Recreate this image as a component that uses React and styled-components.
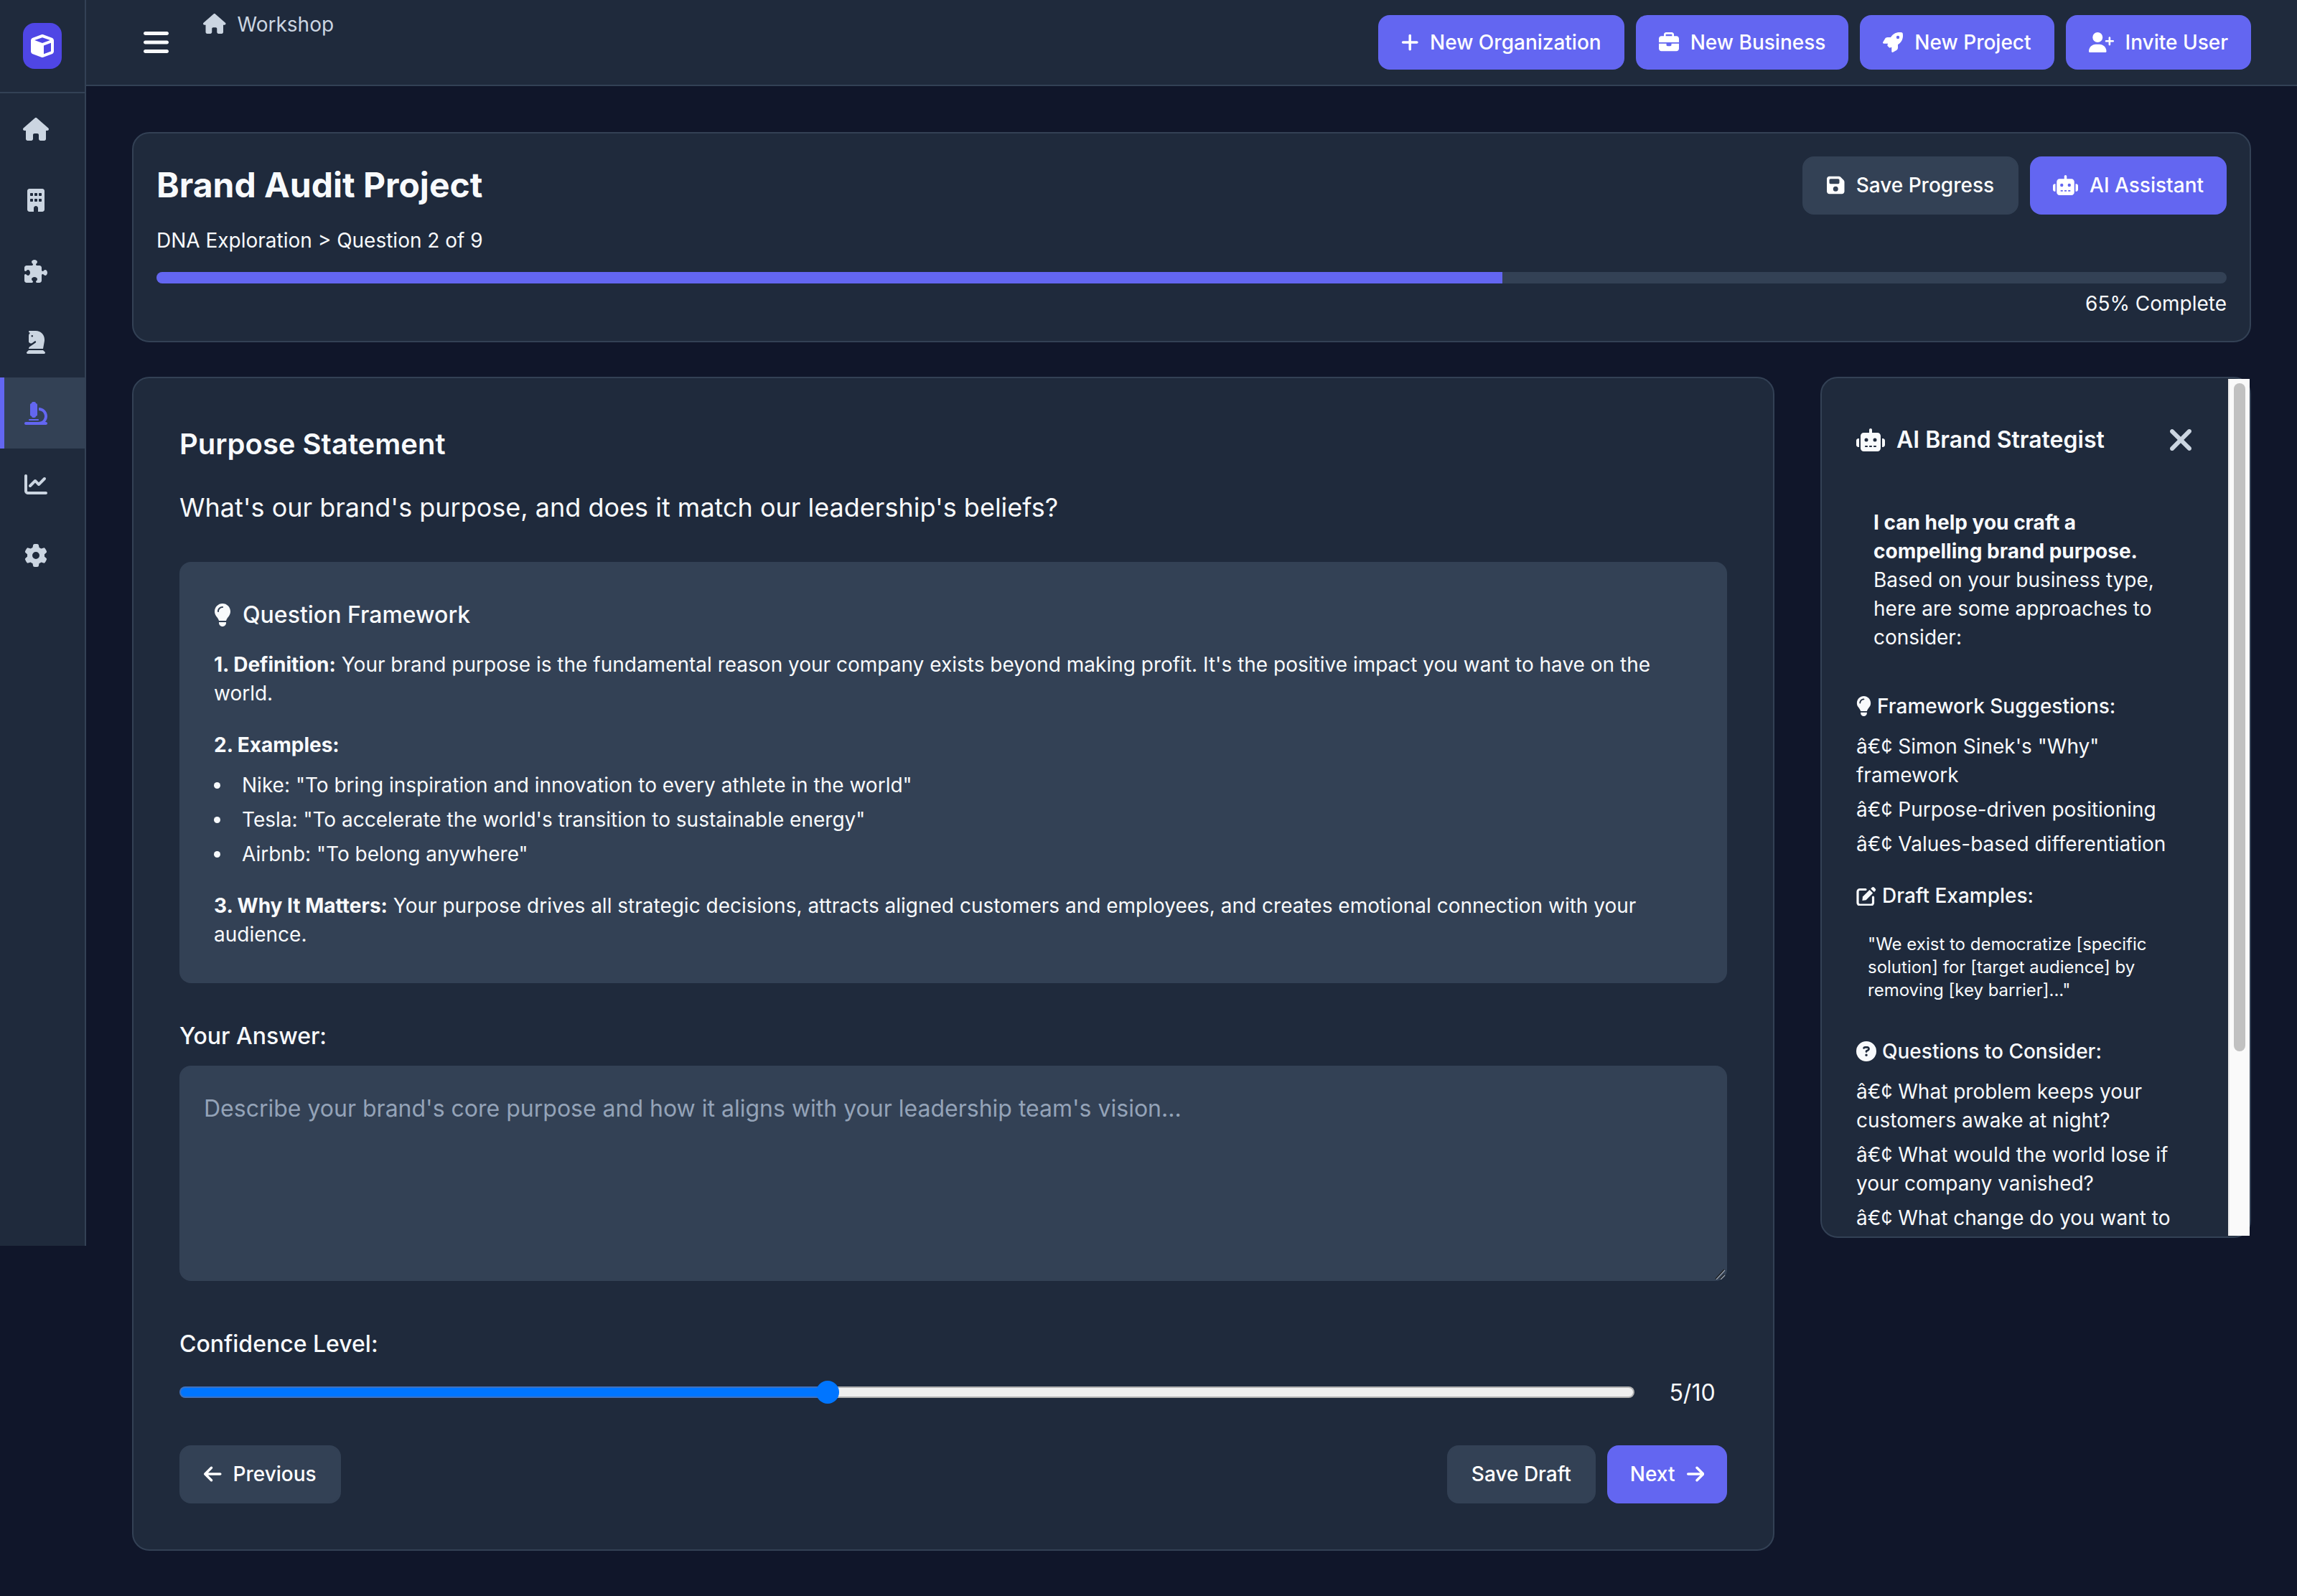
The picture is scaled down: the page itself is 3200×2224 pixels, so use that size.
import React from "react";
import styled, { createGlobalStyle } from "styled-components";
import {
  FaHouse as House, FaBuilding as Building, FaPuzzlePiece, FaChessKnight as Knight, FaMicroscope, FaChartLine, FaGear, FaCube,
  FaBars as Bars, FaPlus as Plus, FaBriefcase, FaRocket, FaUserPlus as UserPlus, FaFloppyDisk as Floppy, FaRobot as Robot,
  FaLightbulb as Bulb, FaXmark as Xmark, FaCircleQuestion, FaArrowLeft as ArrowLeft, FaArrowRight as ArrowRight,
} from "react-icons/fa6";

/* Font Awesome glyphs have their own width/height ratio; react-icons draws them all in a square box. */
const glyph = (Icon, ratio) => styled(Icon)`
  width: ${ratio}em;
  height: 1em;
  flex: none;
`;
const FaHouse = glyph(House, 1.125);
const FaBuilding = glyph(Building, 0.75);
const FaChessKnight = glyph(Knight, 0.875);
const FaBars = glyph(Bars, 0.875);
const FaPlus = glyph(Plus, 0.875);
const FaUserPlus = glyph(UserPlus, 1.25);
const FaFloppyDisk = glyph(Floppy, 0.875);
const FaRobot = glyph(Robot, 1.25);
const FaLightbulb = glyph(Bulb, 0.75);
const FaXmark = glyph(Xmark, 0.75);
const FaArrowLeft = glyph(ArrowLeft, 0.875);
const FaArrowRight = glyph(ArrowRight, 0.875);

const EditSvg = styled.svg`
  width: 1em;
  height: 1em;
  flex: none;
`;
const EditIcon = () => (
  <EditSvg viewBox="0 0 28 28">
    <path d="M13 5.5H5a3 3 0 0 0-3 3V24a3 3 0 0 0 3 3h15.5a3 3 0 0 0 3-3v-8" fill="none" stroke="currentColor" strokeWidth="3.2" strokeLinecap="round" />
    <path d="M9 15.6 18.6 6l4.6 4.6-9.6 9.6-5.2.7Z" fill="currentColor" />
    <path d="M20.2 4.4l1.8-1.8a2 2 0 0 1 2.8 0l1.8 1.8a2 2 0 0 1 0 2.8L25 9Z" fill="currentColor" />
  </EditSvg>
);

const Global = createGlobalStyle`
  * { box-sizing: border-box; }
  html, body { margin: 0; padding: 0; background: #10162a; }
  body { font-family: Inter, "Liberation Sans", sans-serif; color: #f8fafc; line-height: 1.6; }
`;

const Shell = styled.div`
  display: flex;
  align-items: flex-start;
  width: 3200px;
  min-height: 2224px;
`;
const Sidebar = styled.aside`
  flex: 0 0 120px;
  height: 1736px;
  background: #1f2a3c;
  border-right: 2px solid #334155;
`;
const SideHead = styled.div`
  height: 130px;
  padding: 32px;
  border-bottom: 2px solid #334155;
`;
const Logo = styled.div`
  width: 54px;
  height: 64px;
  border-radius: 16px;
  background: #4f46e5;
  color: #fff;
  font-size: 32px;
  display: flex;
  align-items: center;
  justify-content: center;
`;
const NavItem = styled.div`
  height: 99px;
  display: flex;
  align-items: center;
  padding-left: ${(p) => (p.$active ? "24px" : "30px")};
  font-size: 32px;
  color: ${(p) => (p.$active ? "#6366f1" : "#cbd5e1")};
  background: ${(p) => (p.$active ? "#334155" : "transparent")};
  border-left: ${(p) => (p.$active ? "6px solid #6366f1" : "0")};
`;
const NavIcon = styled.span`
  width: 40px;
  display: flex;
  justify-content: center;
`;
const Column = styled.div`
  flex: 1;
  min-width: 0;
`;
const Topbar = styled.header`
  height: 120px;
  background: #1f2a3c;
  border-bottom: 2px solid #334155;
  padding: 0 64px 0 80px;
  display: flex;
  align-items: center;
`;
const Burger = styled.div`
  display: flex;
  font-size: 40px;
  color: #f8fafc;
  margin-right: 48px;
`;
const Crumb = styled.div`
  align-self: flex-start;
  margin-top: 12px;
  display: flex;
  align-items: center;
  gap: 16px;
  font-size: 28px;
  line-height: 44px;
  color: #cbd5e1;
  svg { margin-top: -2px; }
`;
const TopActions = styled.div`
  margin-left: auto;
  display: flex;
  gap: 16px;
`;
const Button = styled.button`
  font-family: inherit;
  font-size: 28px;
  font-weight: 500;
  line-height: 36px;
  height: ${(p) => (p.$top ? "76px" : "81px")};
  padding: 0 32px ${(p) => (p.$top ? "0" : "1px")};
  border: ${(p) => (p.$muted ? "2px solid #334155" : "0")};
  border-radius: 16px;
  display: inline-flex;
  align-items: center;
  gap: 16px;
  color: #fff;
  background: ${(p) => (p.$muted ? "#334155" : "#6366f1")};
`;
const Workspace = styled.main`
  padding: 64px;
`;
const Card = styled.section`
  background: #1f2a3c;
  border: 2px solid #334155;
  border-radius: 24px;
`;
const HeaderCard = styled(Card)`
  padding: 32px 32px 32px;
  margin-bottom: 48px;
`;
const HeaderRow = styled.div`
  display: flex;
  justify-content: space-between;
  align-items: flex-start;
`;
const Title = styled.h1`
  margin: 2px 0 16px;
  font-size: 48px;
  line-height: 76.8px;
  font-weight: 700;
`;
const Subtitle = styled.p`
  margin: 0;
  font-size: 28px;
  line-height: 44.8px;
`;
const ActionGroup = styled.div`
  display: flex;
  gap: 16px;
`;
const Track = styled.div`
  height: 16px;
  margin-top: 21px;
  border-radius: 8px;
  overflow: hidden;
  background: #334155;
`;
const Fill = styled.div`
  height: 100%;
  background: #6366f1;
`;
const Percent = styled.div`
  margin-top: 8px;
  text-align: right;
  font-size: 28px;
  line-height: 40px;
`;
const Grid = styled.div`
  display: grid;
  grid-template-columns: 1fr 600px;
  gap: 64px;
  align-items: start;
`;
const MainCard = styled(Card)`
  padding: 64px;
`;
const Heading = styled.h2`
  margin: 0 0 32px;
  font-size: 40px;
  line-height: 56px;
  font-weight: 600;
`;
const Question = styled.p`
  margin: 0 0 47px;
  font-size: 36px;
  line-height: 57.6px;
`;
const Framework = styled.div`
  background: #334155;
  border-radius: 16px;
  padding: 48px;
  margin-bottom: 48px;
`;
const FrameTitle = styled.h3`
  margin: 0 0 24px;
  display: flex;
  align-items: center;
  gap: 16px;
  font-size: 32px;
  line-height: 51px;
  font-weight: 500;
`;
const FrameText = styled.p`
  margin: 0 0 ${(p) => p.$gap ?? 32}px;
  font-size: 28px;
  line-height: 40px;
  strong { font-weight: 700; }
`;
const FrameList = styled.ul`
  margin: 0 0 32px;
  padding: 0;
  list-style: none;
  font-size: 28px;
  line-height: 40px;
`;
const FrameItem = styled.li`
  display: flex;
  align-items: center;
  margin-bottom: 8px;
  &:last-child { margin-bottom: 0; }
  &::before {
    content: "";
    flex: none;
    width: 9px;
    height: 9px;
    margin-right: 30px;
    border-radius: 50%;
    background: #f8fafc;
  }
`;
const Label = styled.label`
  display: block;
  margin-bottom: 16px;
  font-size: 32px;
  line-height: 51px;
  font-weight: 500;
`;
const AnswerWrap = styled.div`
  position: relative;
  margin-bottom: 62px;
`;
const Answer = styled.textarea`
  display: block;
  width: 100%;
  height: 300px;
  padding: 32px;
  background: #334155;
  border: 2px solid #334155;
  border-radius: 16px;
  color: #f8fafc;
  font-family: inherit;
  font-size: 32px;
  line-height: 51px;
  resize: none;
  outline: none;
  &::placeholder { color: #94a3b8; opacity: 1; }
`;
const Grip = styled.svg`
  position: absolute;
  right: 2px;
  bottom: 2px;
  width: 16px;
  height: 16px;
`;
const SliderRow = styled.div`
  display: flex;
  align-items: center;
  gap: 32px;
  height: 52px;
  margin-bottom: 48px;
`;
const Range = styled.input`
  flex: 1;
  min-width: 0;
  margin: 0;
  height: 32px;
  appearance: none;
  background: transparent;
  &::-webkit-slider-runnable-track {
    height: 16px;
    border-radius: 8px;
    border: 2px solid transparent;
    background:
      linear-gradient(to right, #0075ff var(--fill), #efefef var(--fill)) padding-box,
      linear-gradient(to right, #3f72bf var(--fill), #b2b2b2 var(--fill)) border-box;
  }
  &::-webkit-slider-thumb {
    appearance: none;
    width: 32px;
    height: 32px;
    margin-top: -10px;
    border-radius: 50%;
    background: #0075ff;
  }
`;
const RangeValue = styled.div`
  flex: 0 0 97px;
  text-align: center;
  font-size: 32px;
  line-height: 51px;
`;
const NavRow = styled.div`
  display: flex;
  justify-content: space-between;
`;
const Assistant = styled(Card)`
  position: relative;
  height: 1200px;
`;
const AssistantBody = styled.div`
  height: 100%;
  overflow: hidden;
  padding: 48px 78px 0 48px;
  border-radius: 22px;
`;
const ScrollTrack = styled.div`
  position: absolute;
  top: 1px;
  right: 0;
  bottom: 1px;
  width: 30px;
  background: #fafafa;
  border-left: 2px solid #e8e8e8;
`;
const ScrollThumb = styled.div`
  margin: 6px 0 0 6px;
  width: 16px;
  height: 931px;
  border-radius: 8px;
  background: #c1c1c1;
`;
const AssistantHead = styled.div`
  height: 76px;
  margin-bottom: 33px;
  display: flex;
  align-items: center;
  justify-content: space-between;
`;
const AssistantTitle = styled.h3`
  margin: 0;
  display: flex;
  align-items: center;
  gap: 16px;
  font-size: 32px;
  line-height: 51px;
  font-weight: 600;
`;
const Close = styled.div`
  display: flex;
  color: #cbd5e1;
  font-size: 48px;
`;
const Intro = styled.p`
  margin: 0 0 32px;
  padding: 24px;
  font-size: 28px;
  line-height: 40px;
  strong { font-weight: 700; }
`;
const TipGroup = styled.div`
  margin-bottom: 32px;
`;
const TipHead = styled.h4`
  margin: 0 0 16px;
  display: flex;
  align-items: center;
  gap: 8px;
  font-size: 28px;
  line-height: 40px;
  font-weight: 500;
`;
const TipItem = styled.div`
  margin-bottom: 8px;
  font-size: 28px;
  line-height: 40px;
`;
const Draft = styled.blockquote`
  margin: 0 0 33px;
  padding: 16px;
  font-size: 24px;
  line-height: 32px;
`;

const nav = [FaHouse, FaBuilding, FaPuzzlePiece, FaChessKnight, FaMicroscope, FaChartLine, FaGear];
const confidence = { value: 5, min: 1, max: 10 };
const thumbAt = (confidence.value - confidence.min) / (confidence.max - confidence.min);

export default function App() {
  return (
    <>
      <Global />
      <Shell>
        <Sidebar>
          <SideHead>
            <Logo><FaCube /></Logo>
          </SideHead>
          {nav.map((Icon, i) => (
            <NavItem key={i} $active={i === 4}><NavIcon><Icon /></NavIcon></NavItem>
          ))}
        </Sidebar>
        <Column>
          <Topbar>
            <Burger><FaBars /></Burger>
            <Crumb><FaHouse />Workshop</Crumb>
            <TopActions>
              <Button $top><FaPlus />New Organization</Button>
              <Button $top><FaBriefcase />New Business</Button>
              <Button $top><FaRocket />New Project</Button>
              <Button $top><FaUserPlus />Invite User</Button>
            </TopActions>
          </Topbar>
          <Workspace>
            <HeaderCard>
              <HeaderRow>
                <div>
                  <Title>Brand Audit Project</Title>
                  <Subtitle>DNA Exploration &gt; Question 2 of 9</Subtitle>
                </div>
                <ActionGroup>
                  <Button $muted><FaFloppyDisk />Save Progress</Button>
                  <Button><FaRobot />AI Assistant</Button>
                </ActionGroup>
              </HeaderRow>
              <Track><Fill style={{ width: "65%" }} /></Track>
              <Percent>65% Complete</Percent>
            </HeaderCard>
            <Grid>
              <MainCard>
                <Heading>Purpose Statement</Heading>
                <Question>What's our brand's purpose, and does it match our leadership's beliefs?</Question>
                <Framework>
                  <FrameTitle><FaLightbulb />Question Framework</FrameTitle>
                  <FrameText>
                    <strong>1. Definition:</strong> Your brand purpose is the fundamental reason your company exists beyond making profit. It's the positive impact you want to have on the world.
                  </FrameText>
                  <FrameText $gap={16}><strong>2. Examples:</strong></FrameText>
                  <FrameList>
                    <FrameItem>Nike: "To bring inspiration and innovation to every athlete in the world"</FrameItem>
                    <FrameItem>Tesla: "To accelerate the world's transition to sustainable energy"</FrameItem>
                    <FrameItem>Airbnb: "To belong anywhere"</FrameItem>
                  </FrameList>
                  <FrameText $gap={0}>
                    <strong>3. Why It Matters:</strong> Your purpose drives all strategic decisions, attracts aligned customers and employees, and creates emotional connection with your audience.
                  </FrameText>
                </Framework>
                <Label>Your Answer:</Label>
                <AnswerWrap>
                  <Answer placeholder="Describe your brand's core purpose and how it aligns with your leadership team's vision..." />
                  <Grip viewBox="0 0 16 16">
                    <path d="M14 2 L2 15 M14 9 L8 15" stroke="#1e1e1e" strokeWidth="1.2" fill="none" />
                    <path d="M15 3 L3 16 M15 10 L9 16" stroke="#9ca3af" strokeWidth="1.2" fill="none" />
                  </Grip>
                </AnswerWrap>
                <Label>Confidence Level:</Label>
                <SliderRow>
                  <Range
                    type="range"
                    min={confidence.min}
                    max={confidence.max}
                    defaultValue={confidence.value}
                    style={{ "--fill": `${thumbAt * 100}%` }}
                  />
                  <RangeValue>5/10</RangeValue>
                </SliderRow>
                <NavRow>
                  <Button $muted><FaArrowLeft />Previous</Button>
                  <ActionGroup>
                    <Button $muted>Save Draft</Button>
                    <Button>Next<FaArrowRight /></Button>
                  </ActionGroup>
                </NavRow>
              </MainCard>
              <Assistant>
                <AssistantBody>
                  <AssistantHead>
                    <AssistantTitle><FaRobot />AI Brand Strategist</AssistantTitle>
                    <Close><FaXmark /></Close>
                  </AssistantHead>
                  <Intro>
                    <strong>I can help you craft a compelling brand purpose.</strong> Based on your business type, here are some approaches to consider:
                  </Intro>
                  <TipGroup>
                    <TipHead><FaLightbulb />Framework Suggestions:</TipHead>
                    <TipItem>â€¢ Simon Sinek's "Why" framework</TipItem>
                    <TipItem>â€¢ Purpose-driven positioning</TipItem>
                    <TipItem>â€¢ Values-based differentiation</TipItem>
                  </TipGroup>
                  <TipHead><EditIcon />Draft Examples:</TipHead>
                  <Draft>"We exist to democratize [specific solution] for [target audience] by removing [key barrier]..."</Draft>
                  <TipHead><FaCircleQuestion />Questions to Consider:</TipHead>
                  <TipItem>â€¢ What problem keeps your customers awake at night?</TipItem>
                  <TipItem>â€¢ What would the world lose if your company vanished?</TipItem>
                  <TipItem>â€¢ What change do you want to</TipItem>
                </AssistantBody>
                <ScrollTrack><ScrollThumb /></ScrollTrack>
              </Assistant>
            </Grid>
          </Workspace>
        </Column>
      </Shell>
    </>
  );
}
